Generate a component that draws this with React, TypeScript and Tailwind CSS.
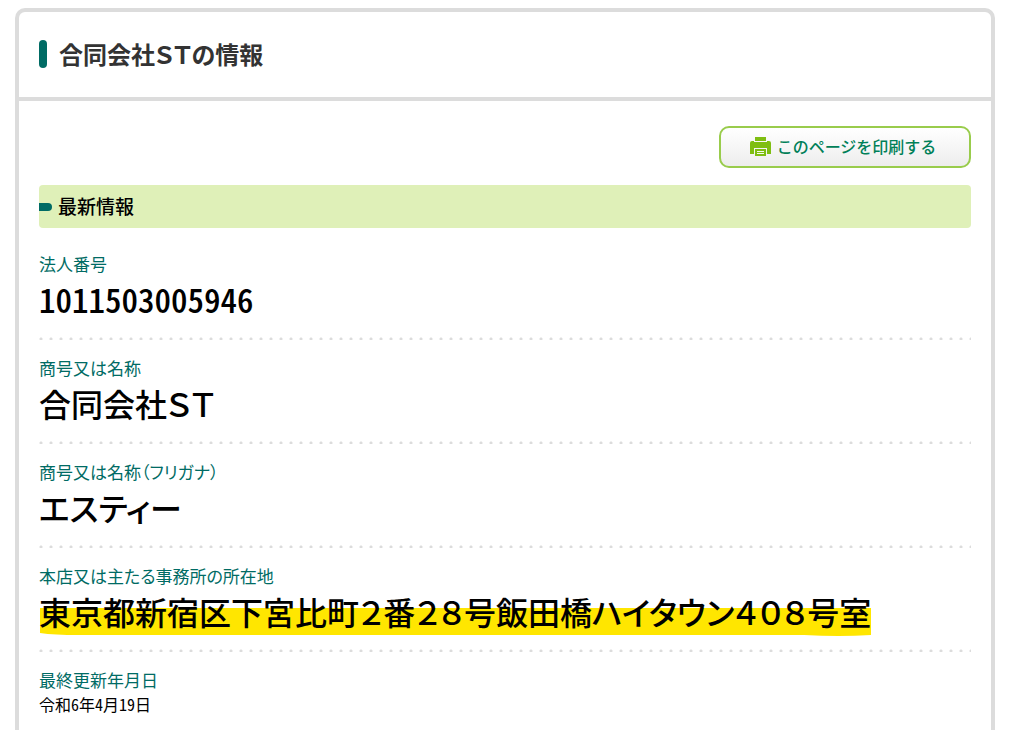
// Company record
interface Ifield {
  label: string;
  value: string;
  kind: "number" | "name" | "date";
  marked?: boolean;
}

const fields: Ifield[] = [
  { label: "法人番号", value: "1011503005946", kind: "number" },
  { label: "商号又は名称", value: "合同会社\uff33\uff34", kind: "name" },
  { label: "商号又は名称（フリガナ）", value: "エスティー", kind: "name" },
  {
    label: "本店又は主たる事務所の所在地",
    value: "東京都新宿区下宮比町\uff12番\uff12\uff18号飯田橋ハイタウン\uff14\uff10\uff18号室",
    kind: "name",
    marked: true,
  },
  { label: "最終更新年月日", value: "令和6年4月19日", kind: "date" },
];

const valueStyle = {
  number: "mt-1 text-[33px] leading-[38px] font-medium [font-feature-settings:'hwid']",
  name: "mt-1 text-[32px] leading-[38px] font-medium",
  date: "text-base leading-6 [font-feature-settings:'hwid']",
};

function PrinterIcon() {
  return (
    <svg width="21" height="19" viewBox="0 0 21 19" aria-hidden="true">
      <path d="M5 0H16V4H5Z" fill="#7fbe12" />
      <path
        d="M0 6Q0 4 2 4H4V6H17V4H19Q21 4 21 6V17H17V11H4V17H0Z"
        fill="#7fbe12"
      />
      <path d="M4 5H17V11H4Z" fill="#7fbe12" />
      <path d="M5 12H16V19H5Z" fill="#7fbe12" />
      <path d="M7 14.5H14M7 16.5H14" stroke="#f7f9f2" strokeWidth="1" />
    </svg>
  );
}

// Yellow marker stroke behind the text
function Marker() {
  return (
    <svg
      className="absolute top-4 left-0 -z-10 h-7 w-full"
      viewBox="0 0 832 28"
      preserveAspectRatio="none"
      aria-hidden="true"
    >
      <path d="M1 0H832V27Q800 29 765 27L40 27Q15 27 1 25Z" fill="#ffe600" />
    </svg>
  );
}

export default function App() {
  return (
    <main className="flex min-h-screen flex-col bg-white pt-2 pr-6 pl-[15px] font-['Noto_Sans_CJK_JP',sans-serif] text-black [font-feature-settings:'palt']">
      <article className="flex-1 rounded-t-[10px] border-4 border-b-0 border-[#dcdcdc]">
        {/* Title */}
        <header className="flex items-center gap-3 border-b-4 border-[#dcdcdc] px-5 pt-[23px] pb-[25px]">
          <span className="h-7 w-2 rounded-full bg-[#006b64]" />
          <h1 className="text-2xl leading-[37px] font-bold text-[#333]">合同会社{"\uff33\uff34"}の情報</h1>
        </header>

        <div className="px-5 pt-[25px]">
          <div className="flex justify-end">
            <button
              type="button"
              className="flex h-[42px] w-[252px] items-center justify-center gap-1.5 rounded-[10px] border-2 border-[#99cc4c] bg-linear-to-b from-white to-[#ededed] pr-1 pb-0.5 text-base font-medium text-[#008058] [font-feature-settings:normal]"
            >
              <PrinterIcon />
              このページを印刷する
            </button>
          </div>

          {/* Section heading */}
          <div className="mt-[17px] flex h-[43px] items-center gap-1.5 rounded bg-[#dff0b8]">
            <span className="h-2 w-[13px] rounded-r-full bg-[#006b64]" />
            <h2 className="text-[19px] font-medium">最新情報</h2>
          </div>

          <dl className="mt-2">
            {fields.map((field) => (
              <div key={field.label}>
                <div className="pt-4 pb-[18px]">
                  <dt className="text-[17px] leading-6 text-[#006b64]">{field.label}</dt>
                  <dd className={valueStyle[field.kind]}>
                    {field.marked ? (
                      <span className="relative isolate inline-block">
                        <Marker />
                        {field.value}
                      </span>
                    ) : (
                      field.value
                    )}
                  </dd>
                </div>
                {field.kind !== "date" && (
                  <div className="h-1 bg-[radial-gradient(circle_at_2px_3px,#dcdcdc_1px,transparent_2px)] bg-[length:10px_4px]" />
                )}
              </div>
            ))}
          </dl>
        </div>
      </article>
    </main>
  );
}
